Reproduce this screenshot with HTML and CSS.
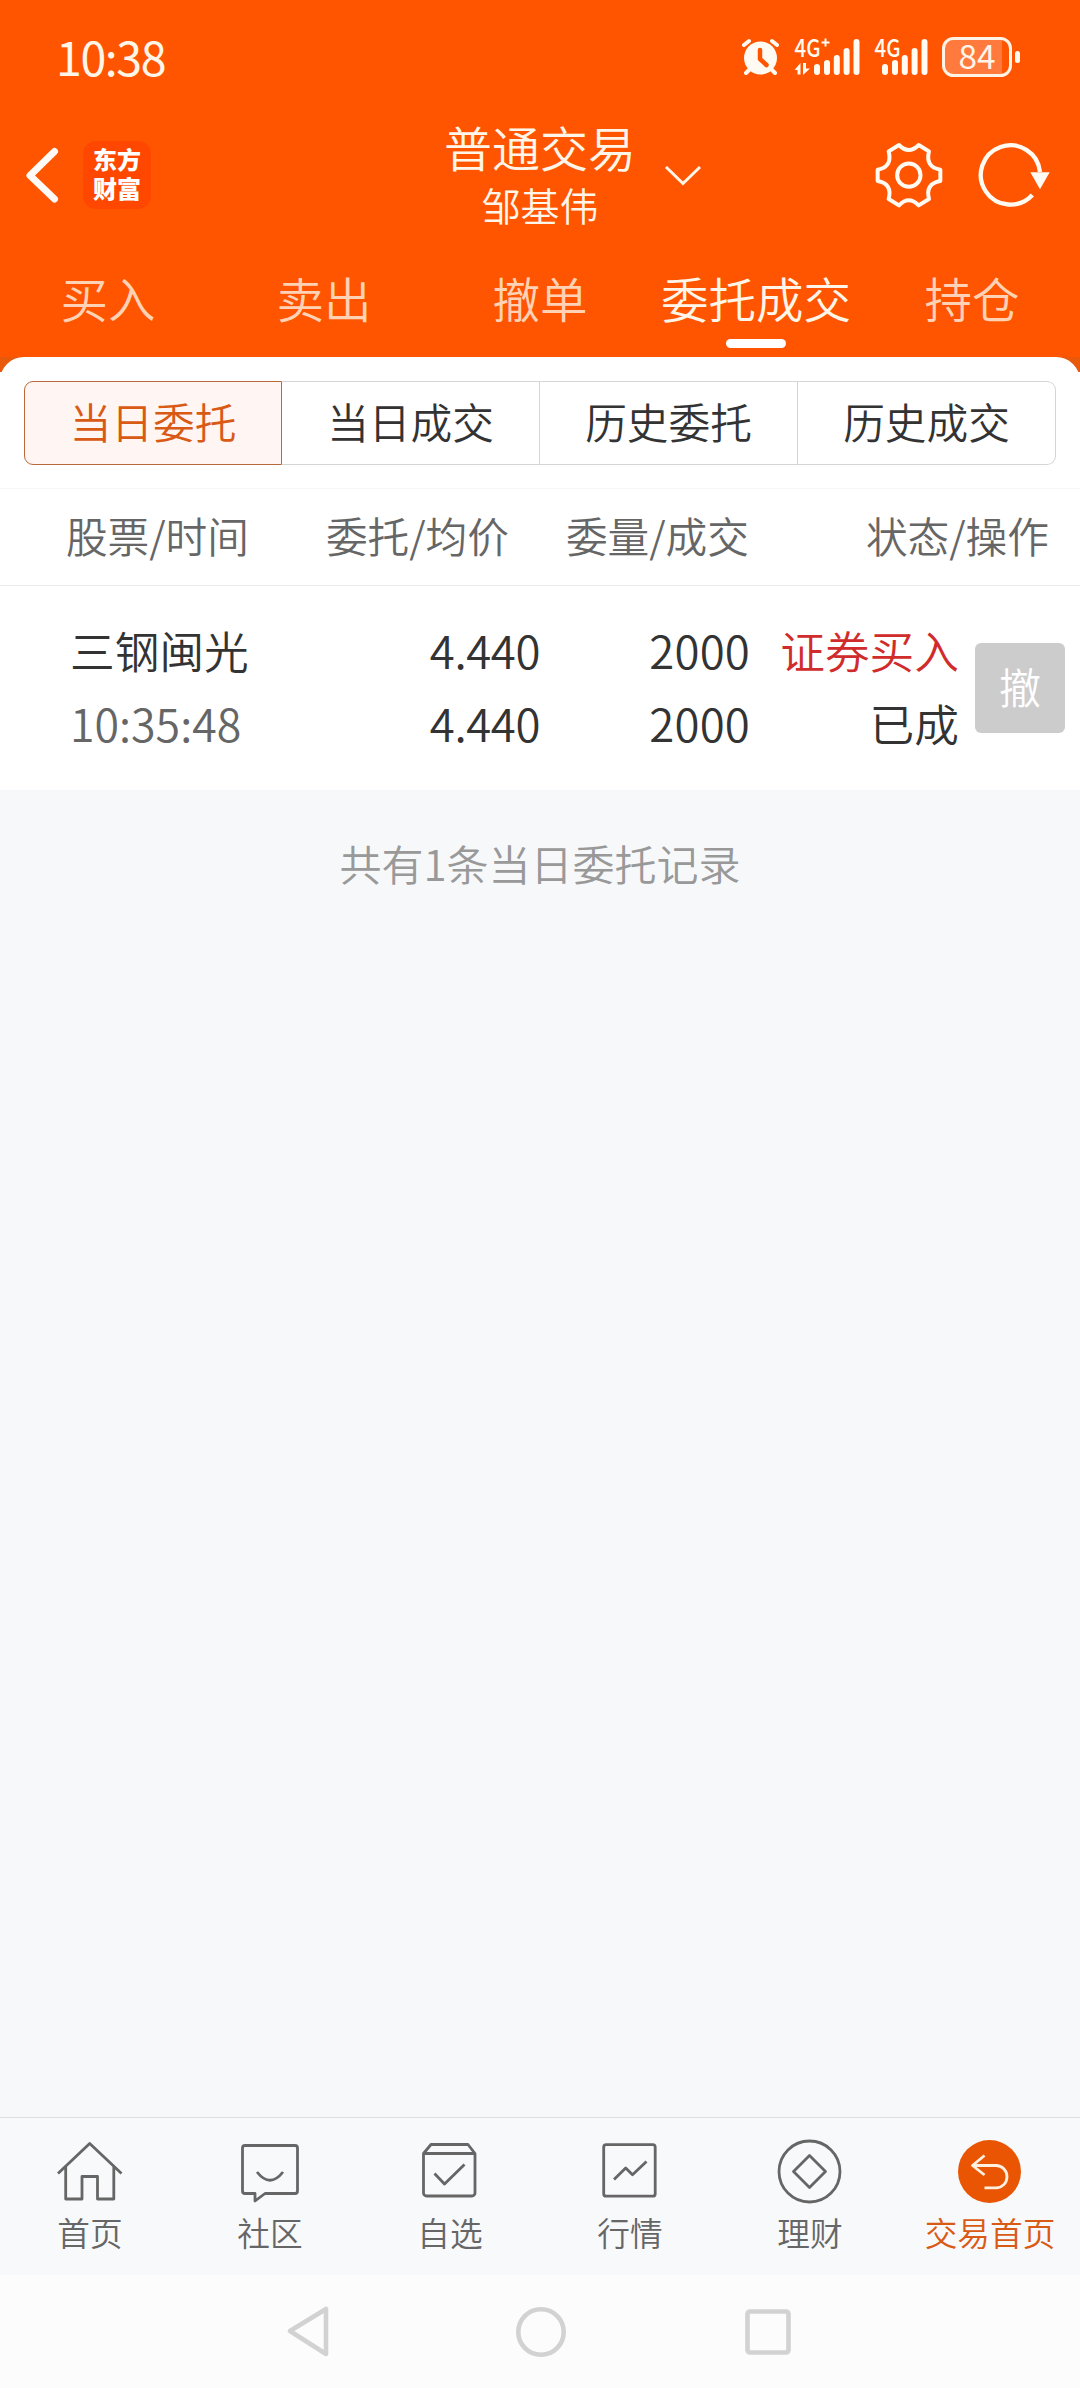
FILE: index.html
```html
<!DOCTYPE html>
<html lang="zh-CN">
<head>
<meta charset="utf-8">
<title>普通交易</title>
<link rel="stylesheet" href="styles.css">
</head>
<body>
<div class="app">
  <header class="top">
    <div class="status">
      <span class="clock">10:38</span>
      <svg class="status-icons" width="290" height="60" viewBox="740 28 290 60">
        <g fill="none" stroke="#fffaf2" stroke-linecap="round">
          <path stroke-width="4" d="M745 45l5-4M778 45l-5-4M751 69l-4 4M772 69l4 4"/>
        </g>
        <circle cx="761.500" cy="58" r="16.500" fill="#fffaf2"/>
        <path d="M761 50v9l6.500 6" fill="none" stroke="#ff5500" stroke-width="4.500" stroke-linecap="round" stroke-linejoin="round"/>
        <g fill="#fffaf2">
          <text class="net" x="795.500" y="56.500" textLength="26" lengthAdjust="spacingAndGlyphs">4G</text>
          <path d="M822.500 41.500h3v-3h2v3h3v2h-3v3h-2v-3h-3z"/>
          <path d="M795.500 70l6-7v11.500h-3V70zM804 63h3v5.500h4l-7 6.500z"/>
          <rect x="815" y="64" width="6" height="11" rx="3"/>
          <rect x="825" y="60" width="6" height="15" rx="3"/>
          <rect x="834.800" y="55" width="6" height="20" rx="3"/>
          <rect x="844.600" y="48" width="6" height="27" rx="3"/>
          <rect x="854.500" y="39" width="6" height="36" rx="3"/>
          <text class="net" x="875.500" y="56.500" textLength="26" lengthAdjust="spacingAndGlyphs">4G</text>
          <rect x="883" y="64" width="6" height="11" rx="3"/>
          <rect x="893" y="60" width="6" height="15" rx="3"/>
          <rect x="902.800" y="55" width="6" height="20" rx="3"/>
          <rect x="912.600" y="48" width="6" height="27" rx="3"/>
          <rect x="922.500" y="39" width="6" height="36" rx="3"/>
          <rect x="1016" y="51" width="5" height="12" rx="2.500"/>
        </g>
        <path d="M1003 40v34H954a9 9 0 0 1-9-9V49a9 9 0 0 1 9-9z" fill="#ff7a3c"/>
        <rect x="944.500" y="38.500" width="67" height="37" rx="10" fill="none" stroke="#fff3e6" stroke-width="3"/>
        <text class="charge" x="959.500" y="69" textLength="37" lengthAdjust="spacingAndGlyphs">84</text>
      </svg>
    </div>
    <div class="titlebar">
      <div class="side">
        <svg width="36" height="60" viewBox="24 145 36 60"><path d="M54.500 151.500L30 175.500l24.500 23.500" fill="none" stroke="#fffaf5" stroke-width="7" stroke-linecap="round" stroke-linejoin="round"/></svg>
        <div class="logo">东方<br>财富</div>
      </div>
      <div class="title">
        <div class="names"><span class="account">普通交易</span><span class="owner">邹基伟</span></div>
        <svg class="caret" width="40" height="24" viewBox="664 162 40 24"><path d="M667 166l17 16.500 17-16.500" fill="none" stroke="#fff5e8" stroke-width="3"/></svg>
      </div>
      <div class="side side-end">
        <svg width="70" height="70" viewBox="527 419 210 210" fill="none" stroke="#fffaf2" stroke-width="12" stroke-linejoin="round">
          <path d="M602 434Q631 464 661 434L692 453Q680 500 726 508V542Q680 550 692 596L661 615Q631 585 602 615L571 596Q583 550 538 542V508Q583 500 571 453Z"/>
          <circle cx="631.500" cy="524.500" r="35"/>
        </svg>
        <svg width="74" height="70" viewBox="835 419 222 210"><path d="M1021 515A89 89 0 1 0 998 584" fill="none" stroke="#fffaf2" stroke-width="13"/><path d="M992 516h58l-29 51z" fill="#fffaf2"/></svg>
      </div>
    </div>
    <nav class="tabs">
      <a>买入</a><a>卖出</a><a>撤单</a><a class="on">委托成交</a><a>持仓</a>
    </nav>
  </header>

  <main class="body">
    <div class="corner">
      <div class="panel">
        <div class="segments">
          <button class="on">当日委托</button><button>当日成交</button><button>历史委托</button><button>历史成交</button>
        </div>
      </div>
    </div>
    <div class="grid head">
      <span>股票/时间</span><span>委托/均价</span><span>委量/成交</span><span>状态/操作</span>
    </div>
    <div class="grid order">
      <div class="cell"><span class="stock">三钢闽光</span><span class="time">10:35:48</span></div>
      <div class="cell num price"><span>4.440</span><span>4.440</span></div>
      <div class="cell num"><span>2000</span><span>2000</span></div>
      <div class="cell"><span class="buy">证券买入</span><span>已成</span></div>
      <button class="cancel">撤</button>
    </div>
    <p class="summary">共有1条当日委托记录</p>
  </main>

  <nav class="dock">
    <a><svg viewBox="0 0 72 72"><path d="M4 38.500L35.700 8.500 67.500 38.500M11.700 32v32H28V41.500h15.500V64h16.300V32"/></svg>首页</a>
    <a><svg viewBox="0 0 72 72"><path d="M11 10.500h50a2.500 2.500 0 0 1 2.500 2.500v43a2.500 2.500 0 0 1-2.500 2.500H31L21 66V58.500H11A2.500 2.500 0 0 1 8.500 56V13a2.500 2.500 0 0 1 2.500-2.500zM23 37q13 16.500 26 0"/></svg>社区</a>
    <a><svg viewBox="0 0 72 72"><path d="M9.500 18.500L17 9.500h37l7 9zM9.500 18.500V58a3 3 0 0 0 3 3H58a3 3 0 0 0 3-3V18.500M20.500 38.500l10 10.500L50.500 29.500"/></svg>自选</a>
    <a><svg viewBox="0 0 72 72"><rect x="9.700" y="9.700" width="51.500" height="51.500" rx="2.500"/><path d="M20 44.500L31.700 33l6.800 6.800L52.500 26.500"/></svg>行情</a>
    <a><svg viewBox="0 0 72 72"><circle cx="35.500" cy="36.500" r="30.500"/><path d="M35.500 20.500l16 16-16 16-16-16z"/></svg>理财</a>
    <a class="on"><svg viewBox="0 0 72 72"><circle class="disc" cx="35.500" cy="36.500" r="31.500"/><path d="M30.500 20.500L18.500 30.500l12 9.500M18.500 30.500H42a11 11.200 0 0 1 0 22.400H30.500"/></svg>交易首页</a>
  </nav>
  <div class="sysnav">
    <svg width="48" height="56" viewBox="0 0 48 56"><path d="M5 27L41 5v45z"/></svg>
    <svg width="56" height="56" viewBox="0 0 56 56"><circle cx="28" cy="28" r="22.700"/></svg>
    <svg width="56" height="56" viewBox="0 0 56 56"><rect x="7.500" y="7.500" width="41" height="41" rx="2.500"/></svg>
  </div>
</div>
</body>
</html>
```
FILE: styles.css
```css
* { box-sizing: border-box; }
body {
  margin: 0;
  font-family: "Noto Sans CJK SC", "Noto Sans", sans-serif;
  font-weight: 350;
  color: #333;
}
button { font: inherit; color: inherit; border: 0; background: none; padding: 0; }
svg { display: block; flex: none; }
.app { width: 1080px; height: 2388px; display: flex; flex-direction: column; background: #f7f8fa; }

.top { height: 357px; background: #ff5500; color: #fff5e8; }
.status { height: 116px; padding: 0 51px 0 56px; display: flex; align-items: center; justify-content: space-between; }
.clock { font-size: 46.500px; font-weight: 400; letter-spacing: -1.4px; line-height: 60px; padding-bottom: 5px; }
.net { font-size: 24px; font-weight: 500; }
.charge { font-size: 33px; font-weight: 400; fill: #fff5e8; }

.titlebar { height: 118px; padding: 0 28px 0 24px; display: grid; grid-template-columns: 1fr 192px 1fr; align-items: center; }
.side { display: flex; align-items: center; gap: 23px; }
.side-end { justify-content: flex-end; gap: 34px; }
.logo { width: 68px; height: 68px; border-radius: 13px; background: #ff4700; padding-top: 3px; text-align: center; font-size: 24px; line-height: 29px; font-weight: 900; color: #fff; }
.title { position: relative; left: 2px; text-align: center; }
.names { display: flex; flex-direction: column; padding-bottom: 2px; }
.account { font-size: 48px; line-height: 61px; }
.owner { font-size: 39px; line-height: 55px; }
.caret { position: absolute; left: 219px; top: 47px; }

.tabs { height: 123px; display: grid; grid-template-columns: repeat(5, 1fr); }
.tabs a { display: flex; flex-direction: column; align-items: center; font-size: 47.500px; line-height: 64px; padding-top: 32px; color: #ffd2b5; white-space: nowrap; }
.tabs .on { color: #fff5e8; }
.tabs .on::after { content: ""; width: 60px; height: 9px; margin-top: 9px; border-radius: 5px; background: #fff; }

.body { flex: 1; }
.corner { background: linear-gradient(#e8590c 15px, #fff 15px); }
.panel { height: 132px; padding: 24px 24px 0; background: #fff; border-radius: 24px 24px 0 0; border-bottom: 1px solid #f7f7f7; }
.segments { height: 84px; display: grid; grid-template-columns: repeat(4, 1fr); }
.segments button { font-size: 41.700px; padding-bottom: 5px; border: 1px solid #d5d5d5; border-left-width: 0; }
.segments .on { color: #d95a14; background: #fff6f3; border: 1px solid #b96a3c; border-radius: 9px 0 0 9px; }
.segments button:last-child { border-radius: 0 9px 9px 0; }

.grid { display: grid; background: #fff; }
.head { height: 97px; padding-bottom: 5px; grid-template-columns: 249px 260px 240px 300px; align-items: center; justify-items: end; border-bottom: 1px solid #ebebeb; font-size: 41.700px; color: #666; }
.order { height: 204px; grid-template-columns: 248px 292px 210px 209px 106px; padding-top: 27px; }
.cell { display: flex; flex-direction: column; align-items: flex-end; font-size: 44.700px; line-height: 73px; }
.cell:first-child { align-items: flex-start; padding-left: 70px; }
.num { font-size: 45.500px; letter-spacing: 0.2px; }
.price { letter-spacing: -0.4px; }
.stock { white-space: nowrap; }
.time { color: #666; letter-spacing: 0; }
.buy { color: #d12c2c; }
.cancel { width: 90px; height: 90px; margin: 30px 0 0 16px; padding-bottom: 4px; border-radius: 6px; background: #ccc; color: #fff; font-size: 42px; line-height: 86px; }
.summary { margin: 43px 0 0; text-align: center; font-size: 42px; line-height: 60px; color: #999; }

.dock { height: 158px; border-top: 1px solid #dfdfdf; background: #f8f9fb; display: grid; grid-template-columns: repeat(6, 1fr); }
.dock a { display: flex; flex-direction: column; align-items: center; padding-top: 17px; font-size: 32.700px; line-height: 48px; color: #666; }
.dock svg { width: 72px; height: 72px; fill: none; stroke: #666; stroke-width: 2.800; stroke-linejoin: round; margin-bottom: 1px; }
.dock .on { color: #d95a14; }
.dock .on svg { stroke: #fff0e0; }
.dock .disc { fill: #ea5504; stroke: none; }
.sysnav { height: 113px; padding: 0 284px 0 285px; background: #fcfcfc; display: grid; grid-template-columns: 1fr 56px 1fr; align-items: center; }
.sysnav svg { fill: none; stroke: #d2d2d2; stroke-width: 4.600; stroke-linejoin: round; }
.sysnav svg:last-child { justify-self: end; }
```
